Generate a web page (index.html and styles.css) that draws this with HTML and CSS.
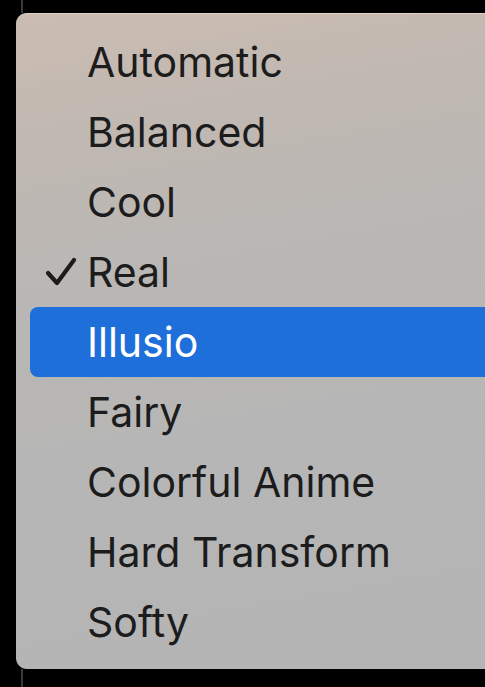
FILE: index.html
```html
<!DOCTYPE html>
<html lang="en">
<head>
    <meta charset="UTF-8">
    <meta name="viewport" content="width=device-width, initial-scale=1.0">
    <title>Style Menu</title>
    <link rel="stylesheet" href="styles.css">
</head>
<body>
    <div class="rail top"></div>
    <div class="menu">
        <ul>
            <li><span class="check"></span>Automatic</li>
            <li><span class="check"></span>Balanced</li>
            <li><span class="check"></span>Cool</li>
            <li><span class="check">
                <svg width="32" height="30" viewBox="0 0 32 30"><path d="M3 16 L12 26 L29 3" fill="none" stroke="#1c1c1c" stroke-width="4.2" stroke-linecap="round" stroke-linejoin="round"/></svg>
            </span>Real</li>
            <li class="active"><span class="check"></span>Illusio</li>
            <li><span class="check"></span>Fairy</li>
            <li><span class="check"></span>Colorful Anime</li>
            <li><span class="check"></span>Hard Transform</li>
            <li><span class="check"></span>Softy</li>
        </ul>
    </div>
    <div class="rail bottom"></div>
</body>
</html>
```

FILE: styles.css
```css
body {
    margin: 0;
    background: #000;
    font-family: Inter, "Noto Sans", sans-serif;
    width: 485px;
    height: 687px;
    overflow: hidden;
}
.rail {
    width: 2px;
    margin-left: 21px;
    background: #3a3a3a;
}
.rail.top { height: 13px; }
.rail.bottom { height: 18px; }
.menu {
    margin-left: 16px;
    height: 656px;
    box-sizing: border-box;
    padding: 13px 0 13px 14px;
    border-radius: 11px 0 0 11px;
    border-top: 1px solid #ddd3ca;
    background: linear-gradient(170deg, #cbbcb1 0%, #c0b8b2 18%, #b9b7b5 40%, #b6b6b6 70%, #b4b4b4 100%);
}
ul {
    list-style: none;
    margin: 0;
    padding: 0;
}
li {
    display: flex;
    align-items: center;
    height: 70px;
    padding-left: 12px;
    border-radius: 8px 0 0 8px;
    color: #1c1c1c;
    font-size: 41px;
}
li.active {
    background: #1f6fda;
    color: #fff;
}
.check {
    width: 44px;
    padding-left: 1px;
    display: flex;
    align-items: center;
}
.check svg {
    margin-left: 2px;
}
```
